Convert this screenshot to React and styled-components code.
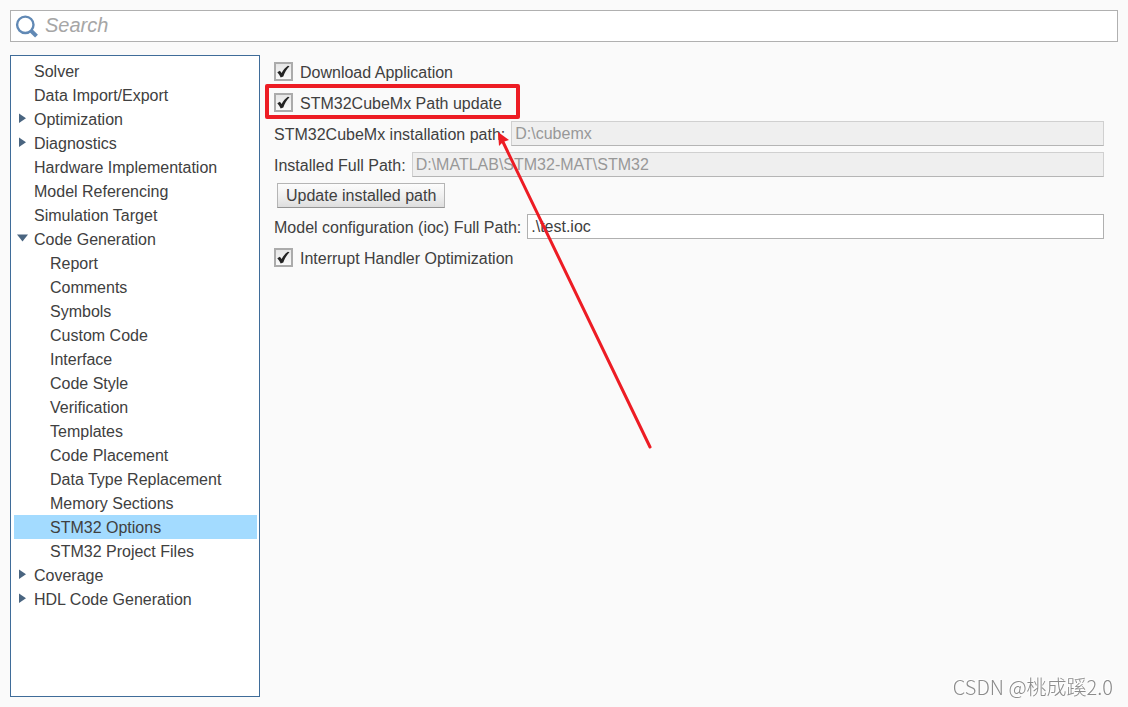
import React, { useState } from "react";
import styled, { createGlobalStyle } from "styled-components";

const GlobalStyle = createGlobalStyle`
  * {
    box-sizing: border-box;
  }

  body {
    margin: 0;
    background: #fafafa;
    color: #404040;
    font-family: "Liberation Sans", Arial, sans-serif;
    font-size: 16px;
  }
`;

const Page = styled.div`
  display: flex;
  flex-direction: column;
  gap: 13px;
  min-height: 100vh;
  padding: 10px;
`;

const SearchBar = styled.label`
  display: flex;
  align-items: center;
  gap: 6px;
  height: 32px;
  padding: 0 4px;
  background: #fff;
  border: 1px solid #b0b0b0;
`;

const SearchIcon = styled.svg`
  flex: none;
  width: 24px;
  height: 24px;
`;

const SearchInput = styled.input`
  flex: 1;
  min-width: 0;
  height: 28px;
  padding: 0 0 2px;
  border: none;
  outline: none;
  background: transparent;
  font-family: inherit;
  font-size: 20px;
  color: #404040;

  &::placeholder {
    color: #a6a6a6;
    font-style: italic;
    opacity: 1;
  }
`;

const Body = styled.div`
  display: flex;
  flex: 1;
  gap: 14px;
`;

const Tree = styled.nav`
  flex: none;
  width: 250px;
  padding: 3px 2px 3px 3px;
  background: #fff;
  border: 1px solid #3f6c99;
`;

const TreeItem = styled.button`
  display: flex;
  align-items: center;
  width: 100%;
  height: 24px;
  padding: 2px 0 0 ${(props) => (props.$nested ? "20px" : "4px")};
  border: none;
  background: ${(props) => (props.$selected ? "#a3dbff" : "transparent")};
  color: inherit;
  font-family: inherit;
  font-size: 16px;
  line-height: 22px;
  text-align: left;
  white-space: nowrap;
`;

const Twisty = styled.svg`
  flex: none;
  width: 16px;
  height: 12px;
  margin-bottom: 4px;
  overflow: visible;
  fill: #4a6580;
`;

const TwistySpace = styled.span`
  flex: none;
  width: 16px;
`;

const Form = styled.form`
  position: relative;
  display: flex;
  flex: 1;
  flex-direction: column;
  gap: 6px;
  min-width: 0;
  padding: 4px 14px 0 0;
`;

const CheckRow = styled.label`
  position: relative;
  display: flex;
  align-items: center;
  align-self: flex-start;
  gap: 7px;
  height: 25px;
`;

const LabelText = styled.span`
  padding-top: 2px;
  line-height: 23px;
`;

const CheckBox = styled.span`
  display: grid;
  width: 19px;
  height: 19px;
`;

const CheckInput = styled.input`
  grid-area: 1 / 1;
  appearance: none;
  width: 19px;
  height: 19px;
  margin: 0;
  border: 2px solid #ababab;
  background: linear-gradient(#e6e6e6, #fafafa);
`;

const CheckMark = styled.svg`
  grid-area: 1 / 1;
  z-index: 1;
  width: 19px;
  height: 19px;
  pointer-events: none;
`;

const HighlightBox = styled.span`
  position: absolute;
  inset: -6px -18px -4px -9px;
  border: 4px solid #ed1c24;
  border-radius: 2px;
  pointer-events: none;
`;

const FieldRow = styled.div`
  display: flex;
  align-items: center;
  gap: 6px;
  height: 25px;
  white-space: nowrap;
`;

const FieldLabel = styled.label`
  padding-top: 2px;
  line-height: 23px;
`;

const PathInput = styled.input`
  flex: 1;
  min-width: 0;
  height: 25px;
  padding: 0 3px;
  border: 1px solid #b0b0b0;
  background: #fff;
  color: #404040;
  font-family: inherit;
  font-size: 16px;

  &:disabled {
    border-color: #d0d0d0 #d0d0d0 #b5b5b5;
    background: #efefef;
    color: #989898;
  }
`;

const UpdateButton = styled.button`
  align-self: flex-start;
  height: 25px;
  margin-left: 3px;
  padding: 0 8px;
  border: 1px solid #b5b5b5;
  border-bottom-color: #959595;
  background: linear-gradient(#fcfcfc, #f0f0f0 50%, #dedede);
  color: inherit;
  font-family: inherit;
  font-size: 16px;
`;

const Arrow = styled.svg`
  position: absolute;
  top: 70px;
  left: 220px;
  width: 160px;
  height: 330px;
  pointer-events: none;
`;

const Watermark = styled.div`
  position: fixed;
  right: 15px;
  bottom: 6px;
  color: #8c8c8c;
  font-family: "Noto Sans CJK SC", sans-serif;
  font-size: 20px;
  font-weight: 300;
  line-height: 28px;
  text-shadow: -1px -1px 0 #fff;
`;

const topics = [
  { name: "Solver" },
  { name: "Data Import/Export" },
  { name: "Optimization", arrow: "closed" },
  { name: "Diagnostics", arrow: "closed" },
  { name: "Hardware Implementation" },
  { name: "Model Referencing" },
  { name: "Simulation Target" },
  { name: "Code Generation", arrow: "open" },
  { name: "Report", nested: true },
  { name: "Comments", nested: true },
  { name: "Symbols", nested: true },
  { name: "Custom Code", nested: true },
  { name: "Interface", nested: true },
  { name: "Code Style", nested: true },
  { name: "Verification", nested: true },
  { name: "Templates", nested: true },
  { name: "Code Placement", nested: true },
  { name: "Data Type Replacement", nested: true },
  { name: "Memory Sections", nested: true },
  { name: "STM32 Options", nested: true },
  { name: "STM32 Project Files", nested: true },
  { name: "Coverage", arrow: "closed" },
  { name: "HDL Code Generation", arrow: "closed" },
];

const Marker = ({ arrow }) => {
  if (!arrow) return <TwistySpace />;

  return (
    <Twisty viewBox="0 0 16 12" aria-hidden="true">
      <path d={arrow === "open" ? "M-1 2.500h11l-5.500 7z" : "M1 1.500l7 4.700-7 4.700z"} />
    </Twisty>
  );
};

const CheckOption = ({ label, highlighted }) => {
  const [checked, setChecked] = useState(true);

  return (
    <CheckRow>
      <CheckBox>
        <CheckInput
          type="checkbox"
          checked={checked}
          onChange={(e) => setChecked(e.target.checked)}
        />
        {checked && (
          <CheckMark viewBox="0 0 19 19" aria-hidden="true">
            <path
              d="M3.300 10.200l2.600-1.500 1.700 2.300c1.700-3 3.800-5.600 6.300-7.200l1.600.4c-2.900 3-4.900 6.500-6.200 10.400l-2.600.8c-.8-2-1.900-3.700-3.400-5.200z"
              fill="#222"
            />
          </CheckMark>
        )}
      </CheckBox>
      <LabelText>{label}</LabelText>
      {highlighted && <HighlightBox />}
    </CheckRow>
  );
};

const App = () => {
  const [selected, setSelected] = useState("STM32 Options");
  const [search, setSearch] = useState("");
  const [iocPath, setIocPath] = useState(".\\test.ioc");

  return (
    <>
      <GlobalStyle />
      <Page>
        <SearchBar>
          <SearchIcon viewBox="0 0 24 24" fill="none" stroke="#6189b5">
            <circle cx="10.300" cy="10.800" r="8.200" strokeWidth="2.400" />
            <path d="M15.800 16.500l5.700 5.700" strokeWidth="4" />
          </SearchIcon>
          <SearchInput
            type="text"
            placeholder="Search"
            aria-label="Search"
            value={search}
            onChange={(e) => setSearch(e.target.value)}
          />
        </SearchBar>
        <Body>
          <Tree>
            {topics.map((topic) => (
              <TreeItem
                key={topic.name}
                type="button"
                $nested={topic.nested}
                $selected={selected === topic.name}
                onClick={() => setSelected(topic.name)}
              >
                <Marker arrow={topic.arrow} />
                {topic.name}
              </TreeItem>
            ))}
          </Tree>
          <Form onSubmit={(e) => e.preventDefault()}>
            <CheckOption label="Download Application" />
            <CheckOption label="STM32CubeMx Path update" highlighted />
            <FieldRow>
              <FieldLabel htmlFor="cubemx">
                STM32CubeMx installation path:
              </FieldLabel>
              <PathInput id="cubemx" disabled value="D:\cubemx" />
            </FieldRow>
            <FieldRow>
              <FieldLabel htmlFor="installed">Installed Full Path:</FieldLabel>
              <PathInput
                id="installed"
                disabled
                value="D:\MATLAB\STM32-MAT\STM32"
              />
            </FieldRow>
            <UpdateButton type="button">Update installed path</UpdateButton>
            <FieldRow>
              <FieldLabel htmlFor="ioc">
                Model configuration (ioc) Full Path:
              </FieldLabel>
              <PathInput
                id="ioc"
                value={iocPath}
                onChange={(e) => setIocPath(e.target.value)}
              />
            </FieldRow>
            <CheckOption label="Interrupt Handler Optimization" />
            <Arrow viewBox="0 0 160 330" aria-hidden="true">
              <path
                d="M9 17L156 322"
                stroke="#ed1c24"
                strokeWidth="3"
                strokeLinecap="round"
              />
              <path d="M4 7l11 8-6 2-4 4z" fill="#ed1c24" />
            </Arrow>
          </Form>
        </Body>
      </Page>
      <Watermark>CSDN @桃成蹊2.0</Watermark>
    </>
  );
};

export default App;
